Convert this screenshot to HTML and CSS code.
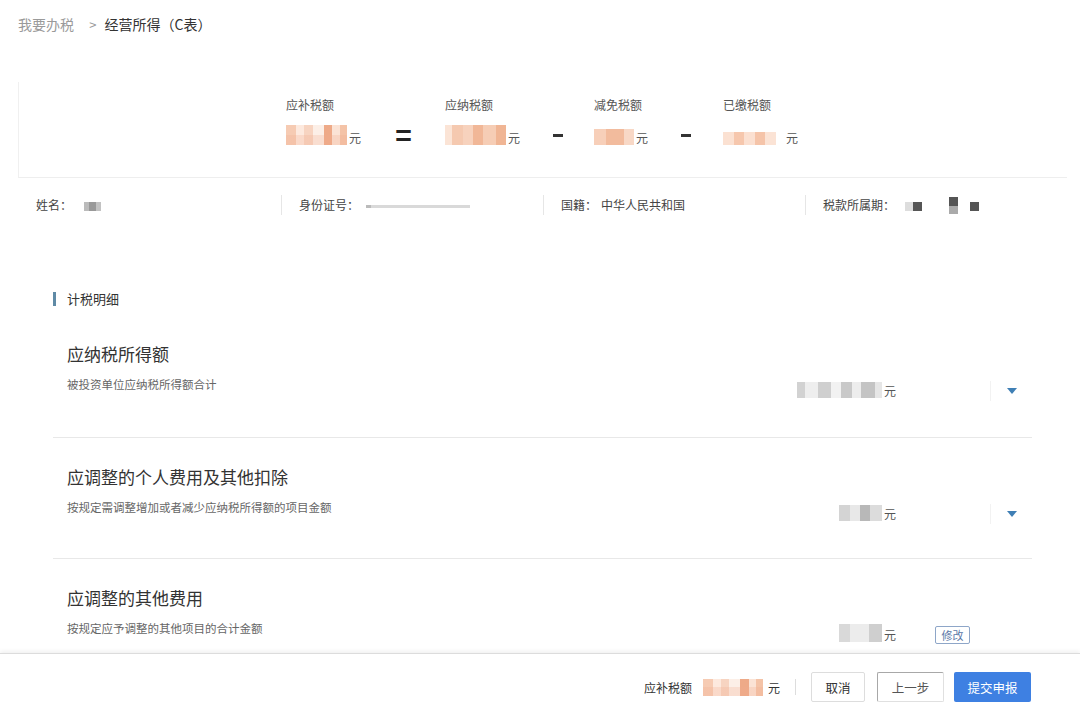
FILE: index.html
```html
<!DOCTYPE html>
<html lang="zh-CN">
<head>
    <meta charset="UTF-8">
    <meta name="viewport" content="width=device-width, initial-scale=1.0">
    <title>经营所得（C表）</title>
    <link rel="stylesheet" href="styles.css">
</head>
<body>
    <div class="page">
        <div class="content">
            <div class="crumbs">
                <span class="crumb-link">我要办税</span>
                <span class="crumb-sep">&gt;</span>
                <span class="crumb-cur">经营所得（C表）</span>
            </div>

            <div class="summary">
                <div class="formula">
                    <div class="col w76">
                        <div class="col-label">应补税额</div>
                        <div class="col-value"><span class="mask peach" style="width:61px"></span><span class="unit">元</span></div>
                    </div>
                    <div class="op op-eq">=</div>
                    <div class="col w76">
                        <div class="col-label">应纳税额</div>
                        <div class="col-value"><span class="mask peach2" style="width:61px"></span><span class="unit">元</span></div>
                    </div>
                    <div class="op op-minus"><span class="dash"></span></div>
                    <div class="col w55">
                        <div class="col-label">减免税额</div>
                        <div class="col-value"><span class="mask peach3" style="width:40px"></span><span class="unit">元</span></div>
                    </div>
                    <div class="op op-minus2"><span class="dash"></span></div>
                    <div class="col w76">
                        <div class="col-label">已缴税额</div>
                        <div class="col-value"><span class="mask peach4" style="width:53px"></span><span class="unit gap">元</span></div>
                    </div>
                </div>
            </div>

            <div class="info">
                <div class="info-cell">姓名：<span class="mask gray-s" style="width:17px"></span></div>
                <div class="info-cell">身份证号：<span class="mask line" style="width:104px"></span></div>
                <div class="info-cell">国籍：<span class="info-val">中华人民共和国</span></div>
                <div class="info-cell">税款所属期：<span class="mask dot light"></span><span class="mask dot"></span><span class="mask dot tall"></span><span class="mask dot"></span></div>
            </div>

            <div class="section">
                <div class="section-title">计税明细</div>

                <div class="item">
                    <div class="item-text">
                        <div class="item-title">应纳税所得额</div>
                        <div class="item-desc">被投资单位应纳税所得额合计</div>
                    </div>
                    <div class="amount"><span class="mask gray" style="width:85px"></span><span class="unit">元</span></div>
                    <div class="action"><span class="action-line"></span><span class="arrow"></span></div>
                </div>

                <div class="item">
                    <div class="item-text">
                        <div class="item-title">应调整的个人费用及其他扣除</div>
                        <div class="item-desc">按规定需调整增加或者减少应纳税所得额的项目金额</div>
                    </div>
                    <div class="amount"><span class="mask gray2" style="width:43px"></span><span class="unit">元</span></div>
                    <div class="action"><span class="action-line"></span><span class="arrow"></span></div>
                </div>

                <div class="item">
                    <div class="item-text">
                        <div class="item-title">应调整的其他费用</div>
                        <div class="item-desc">按规定应予调整的其他项目的合计金额</div>
                    </div>
                    <div class="amount"><span class="mask gray3" style="width:43px"></span><span class="unit">元</span></div>
                    <div class="action"><span class="edit-btn">修改</span></div>
                </div>
            </div>
        </div>

        <div class="footer">
            <span class="footer-label">应补税额</span>
            <span class="mask peach" style="width:60px"></span>
            <span class="footer-unit">元</span>
            <span class="footer-sep"></span>
            <button class="btn">取消</button>
            <button class="btn btn-prev">上一步</button>
            <button class="btn btn-primary">提交申报</button>
        </div>
    </div>
</body>
</html>
```

FILE: styles.css
```css
body {
    margin: 0;
    font-family: "Noto Sans CJK SC", "Noto Sans", sans-serif;
    background-color: #fff;
    color: #333;
}

.page {
    width: 1080px;
    height: 720px;
    display: flex;
    flex-direction: column;
    overflow: hidden;
}

.content {
    flex: 1;
    overflow: hidden;
}

/* fil d'ariane */
.crumbs {
    padding: 13px 18px 0;
    height: 40px;
    font-size: 14px;
    line-height: 22px;
}

.crumb-link {
    color: #9a9a9a;
}

.crumb-sep {
    color: #999;
    margin: 0 5px 0 12px;
    font-size: 13px;
}

.crumb-cur {
    color: #333;
}

/* récapitulatif */
.summary {
    margin: 29px 13px 0 18px;
    height: 95px;
    border-left: 1px solid #f0f0f0;
    border-bottom: 1px solid #eeeeee;
}

.formula {
    display: flex;
    padding: 14px 0 0 267px;
}

.col-label {
    font-size: 12px;
    line-height: 18px;
    color: #555;
}

.col-value {
    display: flex;
    align-items: flex-end;
    margin-top: 9px;
    height: 22px;
}

.w76 { width: 76px; }
.w55 { width: 55px; }

.unit {
    font-size: 12px;
    line-height: 14px;
    color: #555;
    margin-left: 2px;
}

.unit.gap {
    margin-left: 10px;
}

.op {
    display: flex;
    justify-content: center;
    font-size: 28px;
    line-height: 28px;
    padding-top: 24px;
    color: #222;
}

.op-eq { width: 83px; font-weight: bold; }
.op-minus { width: 73px; }
.op-minus2 { width: 74px; }

.dash {
    width: 10px;
    height: 3px;
    margin-top: 14px;
    background: #333;
}

/* masques floutés */
.mask {
    display: inline-block;
    height: 20px;
    filter: blur(0.6px);
}

.peach {
    background:
        linear-gradient(180deg, rgba(255,255,255,0) 50%, rgba(240,170,140,0.25) 50%),
        linear-gradient(90deg, #f6cbb3 0 16%, #fde9de 16% 30%, #f7d4c1 30% 44%, #fcefe7 44% 62%, #eeaa88 62% 76%, #fbe3d5 76% 88%, #f4c3a7 88% 100%);
}

.peach2 {
    background: linear-gradient(90deg, #fbe4d6 0 12%, #f5c9b0 12% 30%, #f7d2bd 30% 46%, #f1b797 46% 62%, #f6cdb5 62% 84%, #f0b594 84% 100%);
}

.peach3 {
    height: 16px;
    background: linear-gradient(90deg, #f7cfb9 0 30%, #f2bb9d 30% 75%, #f8d8c6 75% 100%);
}

.peach4 {
    background:
        linear-gradient(180deg, #fff 0 35%, transparent 35%),
        linear-gradient(90deg, #fbe1d2 0 20%, #f6c7ad 20% 40%, #fbe0d1 40% 60%, #f5c4a9 60% 80%, #fbe3d5 80% 100%);
}

.gray {
    height: 16px;
    background: linear-gradient(90deg, #d2d2d2 0 10%, #eeeeee 10% 25%, #cfcfcf 25% 40%, #f2f2f2 40% 52%, #c9c9c9 52% 65%, #ededed 65% 75%, #c4c4c4 75% 92%, #e6e6e6 92% 100%);
}

.gray2 {
    height: 16px;
    background: linear-gradient(90deg, #d4d4d4 0 25%, #e8e8e8 25% 50%, #b8b8b8 50% 72%, #dcdcdc 72% 100%);
}

.gray3 {
    height: 18px;
    background: linear-gradient(90deg, #d9d9d9 0 25%, #ececec 25% 70%, #cfcfcf 70% 100%);
}

.gray-s {
    height: 9px;
    margin-left: 12px;
    vertical-align: middle;
    background: linear-gradient(90deg, #bbb 0 30%, #999 30% 70%, #c2c2c2 70% 100%);
}

.line {
    height: 3px;
    margin-left: 7px;
    vertical-align: middle;
    background: linear-gradient(90deg, #bbb 0 5%, #d9d9d9 5% 100%);
}

.info-val {
    margin-left: 4px;
}

.dot {
    width: 9px;
    height: 9px;
    margin-left: 36px;
    vertical-align: middle;
    background: #555;
}

.dot.light {
    width: 8px;
    margin-left: 10px;
    background: #ddd;
}

.dot:nth-child(2) {
    margin-left: 0;
}

.dot.tall {
    margin-left: 27px;
    height: 17px;
    vertical-align: top;
    margin-top: 2px;
    background: linear-gradient(180deg, #555 0 55%, #aaa 55% 100%);
}

.dot:last-child {
    margin-left: 12px;
}

/* informations */
.info {
    display: grid;
    grid-template-columns: repeat(4, 262px);
    margin: 17px 0 0 19px;
    font-size: 12px;
    color: #444;
}

.info-cell {
    padding-left: 17px;
    line-height: 20px;
    height: 20px;
    white-space: nowrap;
}

.info-cell + .info-cell {
    border-left: 1px solid #e6e6e6;
}

/* détails */
.section {
    margin: 77px 48px 0 53px;
}

.section-title {
    border-left: 3px solid #5f8aa6;
    padding-left: 11px;
    font-size: 13px;
    line-height: 14px;
    color: #333;
}

.item {
    display: grid;
    grid-template-columns: 1fr auto 136px;
    height: 121px;
    border-bottom: 1px solid #e8e8e8;
    box-sizing: border-box;
}

.section-title + .item {
    margin-top: 9px;
    height: 123px;
}

.item-text {
    padding: 27px 0 0 14px;
}

.item-title {
    font-size: 17px;
    line-height: 24px;
    color: #333;
}

.item-desc {
    margin-top: 10px;
    font-size: 11.5px;
    line-height: 16px;
    color: #666;
}

.amount {
    display: flex;
    align-items: flex-end;
    margin-top: 65px;
    height: 18px;
    align-self: start;
}

.action {
    display: flex;
    align-items: center;
    align-self: start;
    margin-top: 66px;
    height: 20px;
}

.action-line {
    width: 1px;
    height: 20px;
    background: #f2f2f2;
    margin-left: 94px;
}

.arrow {
    margin-left: 16px;
    width: 0;
    height: 0;
    border-left: 5px solid transparent;
    border-right: 5px solid transparent;
    border-top: 6px solid #3f7fb5;
}

.edit-btn {
    margin-left: 39px;
    width: 33px;
    height: 16px;
    border: 1px solid #8ea6c8;
    border-radius: 2px;
    font-size: 11px;
    line-height: 16px;
    text-align: center;
    color: #5b78a8;
}

/* barre du bas */
.footer {
    height: 66px;
    border-top: 1px solid #dcdcdc;
    box-shadow: 0 -2px 4px rgba(0, 0, 0, 0.06);
    display: flex;
    align-items: center;
    justify-content: flex-end;
    padding: 0 49px 0 0;
    font-size: 12px;
    color: #333;
}

.footer .mask {
    height: 17px;
    margin-left: 11px;
}

.footer-unit {
    margin-left: 5px;
}

.footer-sep {
    width: 1px;
    height: 16px;
    background: #ddd;
    margin: 0 15px 0 15px;
}

.btn {
    height: 30px;
    padding: 0;
    border: 1px solid #dddddd;
    border-radius: 2px;
    background-color: #fff;
    color: #333;
    font-family: inherit;
    font-size: 12.5px;
    cursor: pointer;
    width: 54px;
}

.btn-prev {
    width: 67px;
    margin-left: 12px;
    border-color: #a8a8a8 #e0e0e0 #e0e0e0 #a8a8a8;
    color: #555;
}

.btn-primary {
    width: 77px;
    margin-left: 10px;
    border: none;
    background-color: #3e80e2;
    color: #fff;
}
```
